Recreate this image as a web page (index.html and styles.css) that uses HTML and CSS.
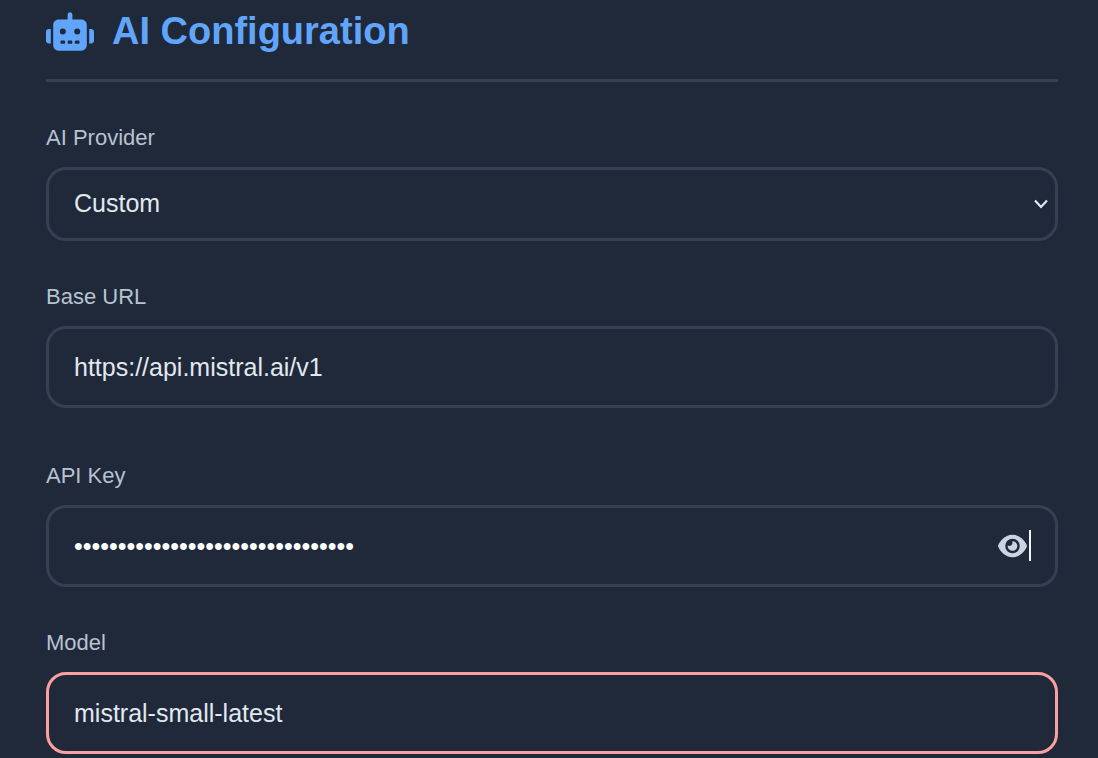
FILE: index.html
```html
<!DOCTYPE html>
<html lang="en">
<head>
<meta charset="utf-8">
<title>AI Configuration</title>
<link rel="stylesheet" href="styles.css">
</head>
<body>
<main class="panel">
  <h1 class="panel-title">
    <svg class="robot-icon" viewBox="0 0 640 512" aria-hidden="true"><path fill="currentColor" d="M320 0c17.700 0 32 14.300 32 32V96H472c39.800 0 72 32.200 72 72V440c0 39.800-32.200 72-72 72H168c-39.800 0-72-32.200-72-72V168c0-39.800 32.200-72 72-72H288V32c0-17.700 14.300-32 32-32zM208 376c-8.800 0-16 9-16 22s7.200 22 16 22h32c8.800 0 16-9 16-22s-7.200-22-16-22H208zm96 0c-8.800 0-16 9-16 22s7.200 22 16 22h32c8.800 0 16-9 16-22s-7.200-22-16-22H304zm96 0c-8.800 0-16 9-16 22s7.200 22 16 22h32c8.800 0 16-9 16-22s-7.200-22-16-22H400zM264 256a40 40 0 1 0-80 0 40 40 0 1 0 80 0zm152 40a40 40 0 1 0 0-80 40 40 0 1 0 0 80zM40 224H64V416H40c-22 0-40-14-40-36V260c0-22 18-36 40-36zm560 0c22 0 40 14 40 36v120c0 22-18 36-40 36H576V224h24z"/></svg>
    AI Configuration
  </h1>
  <form class="form">
    <div class="field">
      <label class="label" for="provider">AI Provider</label>
      <div class="control-wrap">
        <select class="control select" id="provider">
          <option>Custom</option>
        </select>
        <svg class="chevron" viewBox="0 0 14 10" aria-hidden="true"><path d="M1 1.500 7 8 13 1.500" fill="none" stroke="currentColor" stroke-width="2.200"/></svg>
      </div>
    </div>
    <div class="field field-spaced">
      <label class="label" for="base-url">Base URL</label>
      <input class="control" id="base-url" type="text" value="https://api.mistral.ai/v1">
    </div>
    <div class="field">
      <label class="label" for="api-key">API Key</label>
      <div class="control-wrap">
        <input class="control control-secret" id="api-key" type="password" value="abcdefghijklmnopqrstuvwxyz012345">
        <button class="reveal" type="button" aria-label="Show API key">
          <svg class="eye-icon" viewBox="0 0 576 512" aria-hidden="true"><path fill="currentColor" d="M288 32c-80.800 0-145.500 36.800-192.600 80.600C48.600 156 17.300 208 2.500 243.700c-3.300 7.900-3.300 16.700 0 24.600C17.300 304 48.600 356 95.400 399.400C142.500 443.200 207.200 480 288 480s145.500-36.800 192.600-80.600c46.800-43.500 78.100-95.400 93-131.100c3.300-7.900 3.300-16.700 0-24.600c-14.900-35.700-46.200-87.700-93-131.100C433.500 68.800 368.800 32 288 32zM144 256a144 144 0 1 1 288 0 144 144 0 1 1-288 0zm144-64c0 35.300-28.700 64-64 64c-7.100 0-13.900-1.200-20.300-3.300c-5.500-1.800-11.900 1.600-11.700 7.400c.3 6.900 1.300 13.800 3.200 20.700c13.700 51.200 66.400 81.600 117.600 67.900s81.600-66.400 67.900-117.600c-11.100-41.500-47.800-69.400-88.600-71.100c-5.800-.2-9.200 6.100-7.400 11.700c2.100 6.400 3.300 13.200 3.300 20.300z"/></svg>
          <span class="caret"></span>
        </button>
      </div>
    </div>
    <div class="field">
      <label class="label" for="model">Model</label>
      <input class="control control-invalid" id="model" type="text" value="mistral-small-latest" aria-invalid="true">
    </div>
  </form>
</main>
</body>
</html>
```
FILE: styles.css
```css
* {
  box-sizing: border-box;
}

body {
  margin: 0;
  background: #1f293a;
  color: #e2e8f0;
  font-family: "Liberation Sans", Arial, sans-serif;
}

.panel {
  padding: 8px 40px 4px 46px;
}

.panel-title {
  display: flex;
  align-items: center;
  gap: 18px;
  margin: 0 0 43px;
  padding-bottom: 24px;
  border-bottom: 3px solid #334152;
  color: #60a5fa;
  font-size: 38px;
  line-height: 47px;
}

.robot-icon {
  width: 48px;
  height: 39px;
  flex: none;
}

.form {
  display: flex;
  flex-direction: column;
  gap: 43px;
}

.field {
  display: flex;
  flex-direction: column;
  gap: 16px;
}

.field-spaced {
  margin-bottom: 12px;
}

.label {
  color: #b8c2d0;
  font-size: 22px;
  line-height: 26px;
}

.control-wrap {
  position: relative;
}

.control {
  display: block;
  width: 100%;
  margin: 0;
  padding: 24px 25px 23px;
  border: 3px solid #334152;
  border-radius: 20px;
  outline: none;
  background: transparent;
  color: inherit;
  font: 25px/29px "Liberation Sans", Arial, sans-serif;
}

.select {
  padding-block: 19px 20px;
  appearance: none;
}

.control-secret {
  color: #fff;
}

.control-invalid {
  border-color: #fb9fa0;
}

.chevron {
  position: absolute;
  top: 32px;
  right: 10px;
  width: 14px;
  height: 10px;
  pointer-events: none;
}

.reveal {
  position: absolute;
  top: 25px;
  right: 27px;
  display: flex;
  align-items: center;
  gap: 2px;
  padding: 0;
  border: 0;
  background: none;
  color: #cbd5e1;
}

.eye-icon {
  width: 29px;
  height: 26px;
}

.caret {
  width: 2px;
  height: 31px;
  background: #f1f5f9;
}
```
